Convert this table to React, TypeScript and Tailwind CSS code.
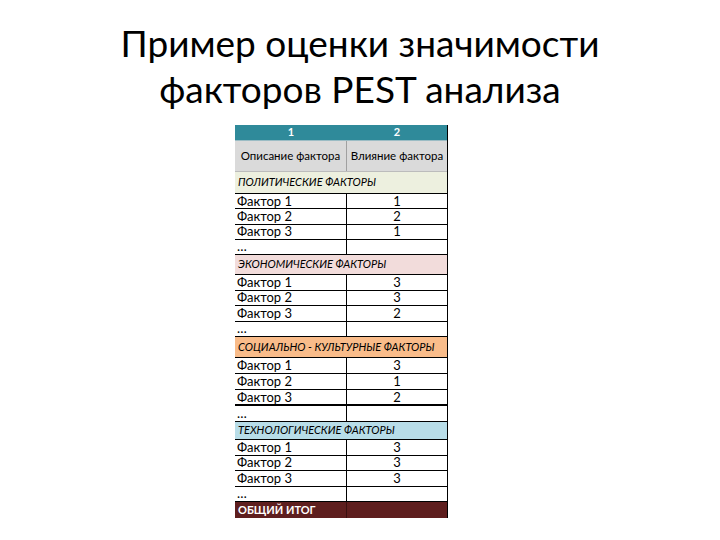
const font = { fontFamily: 'Lato, "Open Sans", sans-serif' };

type Section = { title: string; bg: string; h: string; rows: string[]; rowH: string; thick?: boolean };

const sections: Section[] = [
  { title: "ПОЛИТИЧЕСКИЕ ФАКТОРЫ", bg: "bg-[#edf0df]", h: "h-[22px]", rows: ["1", "2", "1"], rowH: "h-[15.25px]" },
  { title: "ЭКОНОМИЧЕСКИЕ ФАКТОРЫ", bg: "bg-[#f2dcdb]", h: "h-[20px]", rows: ["3", "3", "2"], rowH: "h-[15.5px]" },
  { title: "СОЦИАЛЬНО - КУЛЬТУРНЫЕ ФАКТОРЫ", bg: "bg-[#f9bc8a]", h: "h-[21px]", rows: ["3", "1", "2"], rowH: "h-[16px]", thick: true },
  { title: "ТЕХНОЛОГИЧЕСКИЕ ФАКТОРЫ", bg: "bg-[#b8dde8]", h: "h-[18px]", rows: ["3", "3", "3"], rowH: "h-[15.5px]" },
];

function Row({ label, value, h, thick }: { label: string; value: string; h: string; thick?: boolean }) {
  return (
    <div className={`flex ${h} ${thick ? "border-b-2" : "border-b"} border-black text-[13px] leading-none text-black`}>
      <div className="w-[112px] border-r border-black pl-[2px] flex items-center">{label}</div>
      <div className="flex-1 flex items-center justify-center">{value}</div>
    </div>
  );
}

export default function App() {
  return (
    <div className="w-[720px] h-[540px] bg-white overflow-hidden" style={font}>
      <div className="pt-[20px] text-center text-[37px] leading-[46px] text-black">
        <div>Пример оценки значимости</div>
        <div>факторов PEST анализа</div>
      </div>

      <div className="mt-[13px] ml-[235px] w-[213px] border-r border-black">
        {/* header rows */}
        <div className="flex h-[16px] bg-[#2f8a9a] text-white font-bold text-[11px] border-b border-[#9bbcc4]">
          <div className="w-[112px] flex items-center justify-center">1</div>
          <div className="flex-1 flex items-center justify-center">2</div>
        </div>
        <div className="flex h-[31px] bg-[#dadada] text-[11.5px] text-black border-b border-[#bcbcbc]">
          <div className="w-[112px] border-r border-[#a0a0a0] flex items-center justify-center">Описание фактора</div>
          <div className="flex-1 flex items-center justify-center">Влияние фактора</div>
        </div>

        {sections.map((s) => (
          <div key={s.title}>
            <div className={`${s.h} ${s.bg} border-b border-black flex items-center pl-[3px] text-[11px] italic text-black`}>
              {s.title}
            </div>
            <Row label="Фактор 1" value={s.rows[0]} h={s.rowH} />
            <Row label="Фактор 2" value={s.rows[1]} h={s.rowH} />
            <Row label="Фактор 3" value={s.rows[2]} h={s.rowH} thick={s.thick} />
            <Row label="…" value="" h={s.rowH} />
          </div>
        ))}

        <div className="flex h-[16px] bg-[#5e1e1e] text-white font-bold text-[11px]">
          <div className="w-[112px] border-r border-[#3a1010] pl-[3px] flex items-center">ОБЩИЙ ИТОГ</div>
          <div className="flex-1" />
        </div>
      </div>
    </div>
  );
}
